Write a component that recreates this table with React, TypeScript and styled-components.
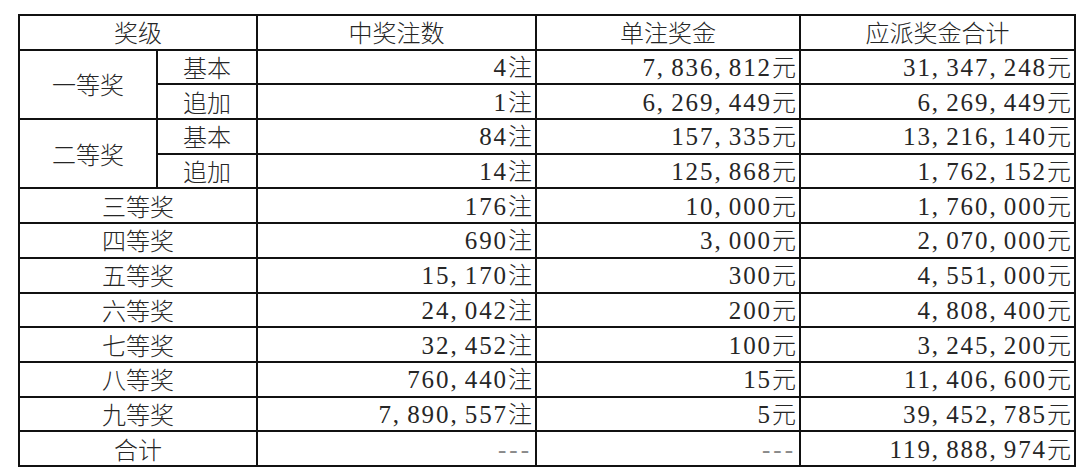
import React from "react";
import styled, { createGlobalStyle } from "styled-components";

const GlobalStyle = createGlobalStyle`
  html, body {
    margin: 0;
    padding: 0;
    background: #fff;
  }
`;

const Page = styled.div`
  padding: 14px 0 0 18px;
`;

const Table = styled.table`
  border-collapse: collapse;
  table-layout: fixed;
  width: 1056px;
  font-family: "Noto Sans CJK SC", sans-serif;
  font-size: 24px;
  font-weight: 300;
  color: #262626;
`;

const Row = styled.tr`
  height: 34.7px;
`;

const Cell = styled.td<{ $align?: "left" | "center" | "right"; $muted?: boolean }>`
  border: 2px solid #111;
  padding: 0 3px 0 3px;
  line-height: 30px;
  text-align: ${(p) => p.$align ?? "right"};
  color: ${(p) => (p.$muted ? "#8a8a8a" : "inherit")};
  white-space: nowrap;
  vertical-align: middle;
`;

const HeadCell = styled(Cell).attrs({ as: "th" })`
  font-weight: 300;
  text-align: center;
`;

const Digits = styled.span`
  font-family: "Liberation Serif", "Times New Roman", "DejaVu Serif", serif;
  font-weight: 400;
  font-size: 25px;
  letter-spacing: 1.9px;
`;

const Comma = styled.span`
  display: inline-block;
  width: 14.4px;
  text-align: left;
  letter-spacing: 0;
`;

const Unit = styled.span`
  font-family: "Noto Sans CJK SC", sans-serif;
  font-size: 24px;
`;

const Dash = styled.span`
  font-family: "Liberation Serif", "Times New Roman", serif;
  font-weight: 400;
  font-size: 25px;
  letter-spacing: 3px;
`;

const Amount = ({ value, unit }: { value: string; unit: string }) => {
  if (value === "---") return <Dash>---</Dash>;
  const parts = value.split(",");
  return (
    <>
      <Digits>
        {parts.map((p, i) => (
          <React.Fragment key={i}>
            {i > 0 && <Comma>,</Comma>}
            {p}
          </React.Fragment>
        ))}
      </Digits>
      <Unit>{unit}</Unit>
    </>
  );
};

interface PrizeRow {
  level?: string;
  span?: number;
  sub?: string;
  count: string;
  each: string;
  total: string;
}

const rows: PrizeRow[] = [
  { level: "一等奖", span: 2, sub: "基本", count: "4", each: "7,836,812", total: "31,347,248" },
  { sub: "追加", count: "1", each: "6,269,449", total: "6,269,449" },
  { level: "二等奖", span: 2, sub: "基本", count: "84", each: "157,335", total: "13,216,140" },
  { sub: "追加", count: "14", each: "125,868", total: "1,762,152" },
  { level: "三等奖", count: "176", each: "10,000", total: "1,760,000" },
  { level: "四等奖", count: "690", each: "3,000", total: "2,070,000" },
  { level: "五等奖", count: "15,170", each: "300", total: "4,551,000" },
  { level: "六等奖", count: "24,042", each: "200", total: "4,808,400" },
  { level: "七等奖", count: "32,452", each: "100", total: "3,245,200" },
  { level: "八等奖", count: "760,440", each: "15", total: "11,406,600" },
  { level: "九等奖", count: "7,890,557", each: "5", total: "39,452,785" },
  { level: "合计", count: "---", each: "---", total: "119,888,974" },
];

export default function App() {
  return (
    <>
      <GlobalStyle />
      <Page>
        <Table>
          <colgroup>
            <col style={{ width: 138 }} />
            <col style={{ width: 100 }} />
            <col style={{ width: 279 }} />
            <col style={{ width: 264 }} />
            <col style={{ width: 275 }} />
          </colgroup>
          <thead>
            <Row>
              <HeadCell colSpan={2}>奖级</HeadCell>
              <HeadCell>中奖注数</HeadCell>
              <HeadCell>单注奖金</HeadCell>
              <HeadCell>应派奖金合计</HeadCell>
            </Row>
          </thead>
          <tbody>
            {rows.map((r, i) => (
              <Row key={i}>
                {r.level && r.sub && (
                  <Cell $align="center" rowSpan={r.span}>
                    {r.level}
                  </Cell>
                )}
                {r.sub && <Cell $align="center">{r.sub}</Cell>}
                {r.level && !r.sub && (
                  <Cell $align="center" colSpan={2}>
                    {r.level}
                  </Cell>
                )}
                <Cell $muted={r.count === "---"}>
                  <Amount value={r.count} unit="注" />
                </Cell>
                <Cell $muted={r.each === "---"}>
                  <Amount value={r.each} unit="元" />
                </Cell>
                <Cell>
                  <Amount value={r.total} unit="元" />
                </Cell>
              </Row>
            ))}
          </tbody>
        </Table>
      </Page>
    </>
  );
}
